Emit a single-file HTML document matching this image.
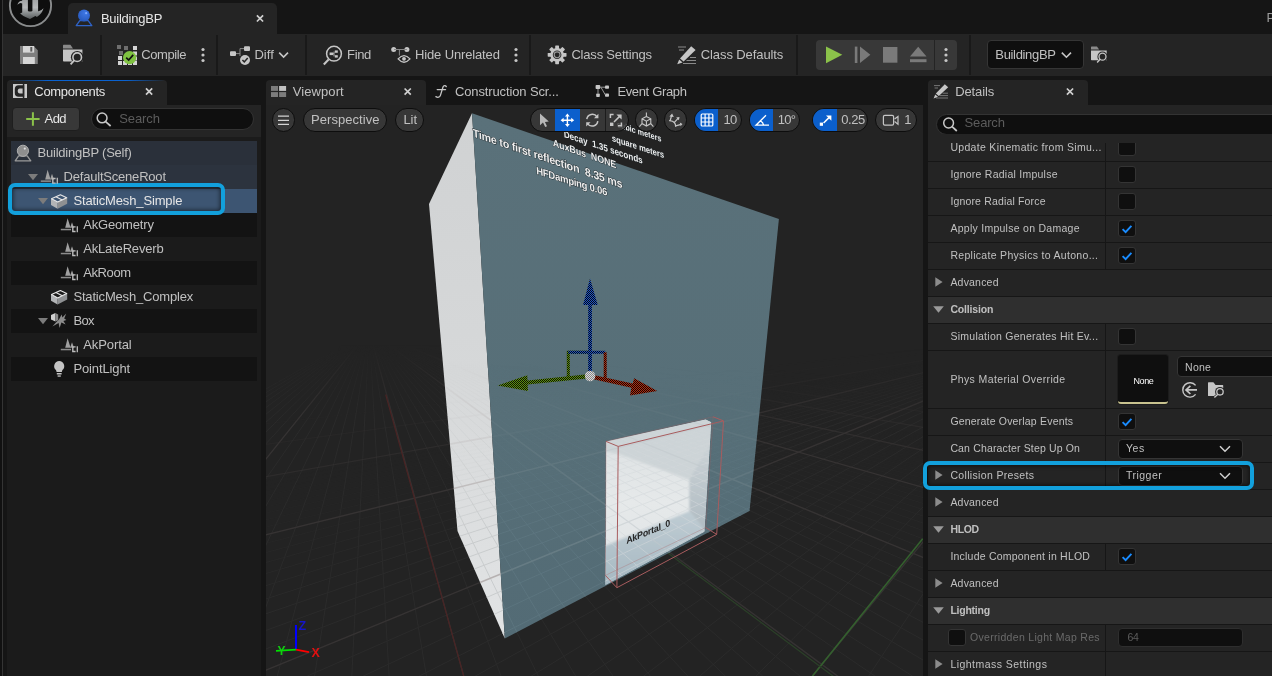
<!DOCTYPE html>
<html>
<head>
<meta charset="utf-8">
<title>BuildingBP</title>
<style>
*{box-sizing:border-box;margin:0;padding:0}
html,body{width:1272px;height:676px;overflow:hidden;background:#151515}
body{font-family:"Liberation Sans",sans-serif;color:#c0c0c0;font-size:13px;position:relative}
.a{position:absolute}
.t{position:absolute;white-space:nowrap;line-height:16px;height:16px}
svg{position:absolute;overflow:visible}
#maintab{left:68px;top:3px;width:209px;height:31px;background:#242424;border-radius:5px 5px 0 0}
#toolbar{left:3px;top:34px;width:1269px;height:42px;background:#242424}
.sep{position:absolute;top:35px;width:2px;height:40px;background:#191919}
#leftstrip{left:0;top:0;width:3px;height:676px;background:#111;border-right:1px solid #343434}
.ptab{position:absolute;top:80px;height:25px;background:#242424;border-radius:4px 4px 0 0}
#comp{left:7px;top:105px;width:254px;height:571px;background:#1b1b1b}
#tree{left:7px;top:105px;width:254px;height:32px;background:#242424}
.row{position:absolute;left:11px;width:246px;height:24px}
#vp{left:266px;top:105px;width:657px;height:571px;background:#232323;overflow:hidden}
#det{left:928px;top:105px;width:344px;height:571px;background:#242424;overflow:hidden}
.drow{position:absolute;left:928px;width:344px;height:27px;background:#242424;border-bottom:1px solid #161616}
.dhead{background:#2f2f2f}
.coldiv{position:absolute;left:1105px;width:1px;background:#161616}
.cb{position:absolute;width:17px;height:17px;background:#0f0f0f;border:1px solid #343434;border-radius:3px}
.combo{position:absolute;background:#0f0f0f;border:1px solid #353535;border-radius:4px}
.pill{position:absolute;background:rgba(60,60,60,.84);border:1px solid #0d0d0d;border-radius:12px;overflow:hidden}
.blue{position:absolute;left:0;top:0;height:100%;background:#0b5fcc}
.hl{position:absolute;border:4px solid #12a0dc;border-radius:7px;box-shadow:inset 0 0 4px 1px rgba(0,0,0,.55)}
</style>
</head>
<body>
<div id="leftstrip" class="a"></div>
<div id="maintab" class="a"></div>
<div id="toolbar" class="a"></div>
<div class="sep" style="left:100px"></div>
<div class="sep" style="left:216px"></div>
<div class="sep" style="left:305px"></div>
<div class="sep" style="left:529px"></div>
<div class="sep" style="left:796px"></div>
<div class="sep" style="left:969px"></div>
<!-- play group -->
<div class="a" style="left:816px;top:40px;width:141px;height:30px;background:#383838;border-radius:4px"></div>
<div class="a" style="left:934px;top:40px;width:1px;height:30px;background:#242424"></div>
<div class="combo" style="left:987px;top:40px;width:97px;height:29px"></div>
<svg style="left:0;top:0" width="1272" height="80" viewBox="0 0 1272 80">
<defs>
<linearGradient id="ug" gradientUnits="userSpaceOnUse" x1="0" y1="0" x2="0" y2="19"><stop offset="0" stop-color="#a2a4a5"/><stop offset="0.4" stop-color="#b6b8b9"/><stop offset="0.68" stop-color="#8a8e8f"/><stop offset="1" stop-color="#585c5d"/></linearGradient>
<radialGradient id="bs" cx="0.6" cy="0.3" r="0.8"><stop offset="0" stop-color="#3f78e6"/><stop offset="1" stop-color="#2455b8"/></radialGradient>
</defs>
<!-- UE logo -->
<circle cx="30.5" cy="5.5" r="20.6" fill="#0e0e0e" stroke="#8a8c8d" stroke-width="1.9"/>
<path d="M22.2 -2 L27.9 -2 L27.9 11 Q30.1 12 32.4 11 L32.4 -2 L38.1 -2 L38.1 11.2 Q41 11.4 43.5 8.3 Q42 14 36.9 17 L35.4 16 L30 18.9 L26 17.2 Q22.5 15.6 20.1 13.4 L22.2 12.6 L22.2 3.6 Q20 2.2 17.4 4.7 Q18.6 1 22.2 0.8 Z" fill="url(#ug)"/>
<!-- tab icon -->
<path d="M79.8 20.6 L88.2 20.6 L91.8 25.6 L76.2 25.6 Z" fill="none" stroke="#2f63c8" stroke-width="1.3" stroke-linejoin="round"/>
<circle cx="84" cy="15.6" r="6" fill="url(#bs)"/>
<circle cx="86.2" cy="13.2" r="1.1" fill="#7aa8ff"/>
<!-- tab close -->
<path d="M256.9 15.3 L263.1 21.5 M263.1 15.3 L256.9 21.5" stroke="#d0d0d0" stroke-width="1.7"/>
<!-- save -->
<path d="M20 46 L33.6 46 L37.8 50.2 L37.8 64 L20 64 Z" fill="#7e7e7e"/>
<rect x="23" y="46" width="11.2" height="6.6" fill="#d6d6d6"/>
<rect x="30.3" y="47" width="2" height="4.6" fill="#5a5a5a"/>
<rect x="23" y="57" width="11.8" height="7" fill="#d6d6d6"/>
<!-- browse folder+magnifier -->
<g id="brw">
<path d="M63 45.2 Q63 44.7 63.6 44.7 L70.4 44.7 L73 48.4 L63 48.4 Z" fill="#8a8a8a"/>
<path d="M63 49.6 L82.4 49.6 L82.4 61.6 L63.8 61.6 Q63 61.6 63 60.8 Z" fill="#c6c6c6"/>
<circle cx="77.2" cy="57.2" r="6.3" fill="#242424"/>
<path d="M68 66 L73.6 60.2 L76 62.6 L70.4 68 Z" fill="#242424"/>
<circle cx="77.2" cy="57.2" r="4.3" fill="none" stroke="#c6c6c6" stroke-width="1.6"/>
<path d="M74.2 60.4 L70.6 64.4" stroke="#c6c6c6" stroke-width="1.8"/>
</g>
<use href="#brw" transform="translate(1091 46.5) scale(0.81) translate(-63 -44.7)"/>
<!-- compile -->
<g>
<rect x="117" y="45" width="4" height="4" fill="#6e6e6e"/><rect x="124" y="46" width="4" height="4" fill="#6e6e6e"/><rect x="133" y="46" width="4" height="4" fill="#d4d4d4"/>
<rect x="119" y="51" width="4" height="4" fill="#6e6e6e"/><rect x="133" y="51.5" width="4" height="4" fill="#d4d4d4"/>
<rect x="118" y="56" width="4" height="4" fill="#d4d4d4"/><rect x="133" y="56.5" width="4" height="4" fill="#d4d4d4"/>
<rect x="118" y="61" width="4" height="4" fill="#d4d4d4"/><rect x="123" y="61" width="4" height="4" fill="#d4d4d4"/><rect x="128" y="61" width="4" height="4" fill="#d4d4d4"/><rect x="133" y="61" width="4" height="4" fill="#d4d4d4"/>
<circle cx="129.6" cy="57.6" r="6.6" fill="#7fc241"/>
<path d="M126.2 57.6 L128.7 60.1 L133.2 54.9" fill="none" stroke="#111" stroke-width="1.7"/>
</g>
<!-- kebabs -->
<g fill="#c6c6c6">
<circle cx="203" cy="49.5" r="1.6"/><circle cx="203" cy="55" r="1.6"/><circle cx="203" cy="60.5" r="1.6"/>
<circle cx="516" cy="49.5" r="1.6"/><circle cx="516" cy="55" r="1.6"/><circle cx="516" cy="60.5" r="1.6"/>
<circle cx="946" cy="49.5" r="1.6"/><circle cx="946" cy="55" r="1.6"/><circle cx="946" cy="60.5" r="1.6"/>
</g>
<!-- diff -->
<g>
<rect x="230" y="51.2" width="6" height="4.8" rx="1" fill="#c6c6c6"/>
<rect x="244" y="46.2" width="6" height="4.8" rx="1" fill="#c6c6c6"/>
<path d="M236 53.6 L240 53.6 M240 56 L240 48.6 L244 48.6" fill="none" stroke="#8a8a8a" stroke-width="1"/>
<circle cx="245" cy="60" r="5" fill="#c6c6c6"/>
<path d="M242.4 60 L244.3 61.9 L247.7 58" fill="none" stroke="#242424" stroke-width="1.5"/>
<path d="M279.2 52.6 L283.6 57 L288 52.6" fill="none" stroke="#c6c6c6" stroke-width="1.6"/>
</g>
<!-- find -->
<g>
<circle cx="334" cy="53.7" r="7.4" fill="none" stroke="#c6c6c6" stroke-width="1.5"/>
<path d="M328.6 59.6 L323.8 64.4" stroke="#c6c6c6" stroke-width="2.1"/>
<rect x="329.6" y="52.5" width="3.4" height="2.6" fill="#c6c6c6"/>
<rect x="334.8" y="50.4" width="3" height="2.4" fill="#c6c6c6"/>
<rect x="334.8" y="55.2" width="3" height="2.4" fill="#c6c6c6"/>
<path d="M333 53.8 L334 53.8 M334 51.6 L334 56.4" stroke="#c6c6c6" stroke-width="0.9"/>
</g>
<!-- hide unrelated -->
<g>
<circle cx="393.7" cy="49.5" r="2.5" fill="#c6c6c6"/><circle cx="406.9" cy="49.5" r="2.5" fill="#c6c6c6"/>
<path d="M394 49.5 L407 49.5 M399.4 49.5 L399.4 55.5" stroke="#8a8a8a" stroke-width="1"/>
<path d="M398.1 58.9 Q404 52.2 410 58.9 Q404 65.6 398.1 58.9 Z" fill="none" stroke="#c6c6c6" stroke-width="1.3"/>
<circle cx="404" cy="58.8" r="1.9" fill="#c6c6c6"/>
</g>
<!-- gear -->
<g transform="translate(557.1 54.8)">
<g fill="#c6c6c6">
<rect x="-1.9" y="-9.4" width="3.8" height="18.8" rx="0.6"/>
<rect x="-1.9" y="-9.4" width="3.8" height="18.8" rx="0.6" transform="rotate(45)"/>
<rect x="-1.9" y="-9.4" width="3.8" height="18.8" rx="0.6" transform="rotate(90)"/>
<rect x="-1.9" y="-9.4" width="3.8" height="18.8" rx="0.6" transform="rotate(135)"/>
<circle r="6.9"/>
</g>
<circle r="4.3" fill="#242424"/>
<circle r="2.9" fill="none" stroke="#9a9a9a" stroke-width="1.1"/>
</g>
<!-- class defaults -->
<g>
<path d="M678 47 L686 47 M679 50 L684 50 M690 57.5 L696 57.5 M686.5 60.5 L696 60.5 M683 63.5 L696 63.5" stroke="#8a8a8a" stroke-width="1"/>
<path d="M691.2 46.2 L695.6 50 L683.6 61.4 L680 58.4 Z" fill="#c6c6c6"/>
<path d="M679.2 59.4 L682.6 62.4 L677.2 64.2 Z" fill="#c6c6c6"/>
</g>
<!-- play controls -->
<path d="M826 46.4 L842.3 54.8 L826 63.2 Z" fill="#8bc24a"/>
<rect x="854.8" y="46.6" width="2.6" height="16.4" fill="#7a7a7a"/>
<path d="M860 46.6 L870.4 54.8 L860 63 Z" fill="#7a7a7a"/>
<rect x="883" y="47" width="14.4" height="15.7" fill="#7a7a7a"/>
<path d="M910 56.6 L926.5 56.6 L918.2 46.8 Z" fill="#7a7a7a"/>
<rect x="910" y="59.2" width="16.5" height="3" fill="#7a7a7a"/>
<!-- combo chevron -->
<path d="M1061.8 52.6 L1066.4 57.2 L1071 52.6" fill="none" stroke="#c6c6c6" stroke-width="1.6"/>
</svg>


<!-- COMPONENTS -->
<div class="ptab" style="left:7px;width:160px"></div><div class="a" style="left:9px;top:80px;width:156px;height:1px;background:linear-gradient(90deg,rgba(10,98,208,0),#0a62d0 25%,#0a62d0 75%,rgba(10,98,208,0))"></div>
<div id="comp" class="a"></div>
<div id="tree" class="a"></div>
<div class="a" style="left:11.5px;top:106.5px;width:68.5px;height:24px;background:#383838;border-radius:4px;border:1px solid #1e1e1e"></div>
<div class="a" style="left:91px;top:108px;width:163px;height:21.5px;background:#0f0f0f;border:1px solid #333;border-radius:11px"></div>
<div class="row" style="top:141px;background:#2a303a"></div>
<div class="row" style="top:165px;background:#2c333e"></div>
<div class="row" style="top:189px;background:#3d5572"></div>
<div class="row" style="top:213px;background:#131313"></div>
<div class="row" style="top:237px;background:#1b1b1b"></div>
<div class="row" style="top:261px;background:#131313"></div>
<div class="row" style="top:285px;background:#1b1b1b"></div>
<div class="row" style="top:309px;background:#131313"></div>
<div class="row" style="top:333px;background:#1b1b1b"></div>
<div class="row" style="top:357px;background:#131313"></div>
<div class="hl" style="left:8px;top:183px;width:217px;height:32px"></div>
<svg style="left:0;top:76px" width="270" height="320" viewBox="0 76 270 320">
<defs>
<g id="scn">
<path d="M0.4 10.2 L2.6 10.2 L5 0.6 L8 10.2 Z" fill="#a0a0a0"/>
<path d="M7.4 10.2 L9.4 4.6 L11.4 10.2 Z" fill="#a0a0a0"/>
<rect x="-1.8" y="11.2" width="10.2" height="1.5" fill="#8c8c8c"/>
<path d="M9 8.2 L15.8 8.2 L15.8 14.6 L9 14.6 Z" fill="#1b1b1b" opacity="0"/>
<path d="M13 9.3 L10.2 9.3 L10.2 13.9 L13 13.9" fill="none" stroke="#bcbcbc" stroke-width="1.4"/>
<path d="M14.7 8.6 L14.7 14.6" fill="none" stroke="#bcbcbc" stroke-width="1.3"/>
</g>
<g id="msh">
<path d="M0 4.6 L6.6 8 L6.6 14.6 L0 10.8 Z" fill="#b2b4b6"/>
<path d="M16.2 3.4 L16.2 9.6 L6.6 14.6 L6.6 8 Z" fill="#8e9092"/>
<path d="M0.5 4.5 L9.4 0.6 L15.7 3.5 L6.7 7.9 Z" fill="none" stroke="#e8e8e8" stroke-width="1.1" stroke-linejoin="round"/>
<path d="M4.9 2.6 L11.3 5.7" stroke="#e8e8e8" stroke-width="1.1"/>
</g>
<path id="arw" d="M0 0 L10 0 L5 6.2 Z" fill="#7c7c7c"/>
</defs>
<!-- components tab icon -->
<rect x="13" y="84" width="14" height="14" fill="#c8c8c8"/>
<path d="M18.6 85.2 L24.2 85.2 L24.2 96.8 L18.6 96.8 Q14.8 96.8 14.8 93 L14.8 89 Q14.8 85.2 18.6 85.2 Z" fill="#242424"/>
<rect x="22.8" y="84" width="1.5" height="14" fill="#242424"/>
<path d="M19.8 88.4 L22.6 88.4 L22.6 93.6 L19.8 93.6 Q17.8 93.6 17.8 91.6 L17.8 90.4 Q17.8 88.4 19.8 88.4 Z" fill="#c8c8c8"/>
<!-- tab close -->
<path d="M146 88.4 L152.2 94.6 M152.2 88.4 L146 94.6" stroke="#d0d0d0" stroke-width="1.7"/>
<!-- plus -->
<path d="M26.2 119 L39.6 119 M32.9 112.2 L32.9 125.8" stroke="#8bc24a" stroke-width="2"/>
<!-- search magnifier -->
<circle cx="102.1" cy="117.9" r="4.9" fill="none" stroke="#c8c8c8" stroke-width="1.5"/>
<path d="M105.6 121.6 L110.6 126" stroke="#c8c8c8" stroke-width="1.7"/>
<!-- row1 actor -->
<path d="M18.6 155.8 L27.2 155.8 L30.8 160.8 L15.2 160.8 Z" fill="none" stroke="#9a9a9a" stroke-width="1.3" stroke-linejoin="round"/>
<circle cx="22.9" cy="150.8" r="5.6" fill="#8e8e8e" stroke="#b0b0b0" stroke-width="1"/>
<circle cx="24.8" cy="148.6" r="1.1" fill="#e0e0e0"/>
<!-- arrows -->
<use href="#arw" x="28" y="174"/>
<use href="#arw" x="38" y="198"/>
<use href="#arw" x="38" y="318"/>
<!-- scene icons -->
<use href="#scn" x="42.6" y="169.2"/>
<use href="#scn" x="62.6" y="217.6"/>
<use href="#scn" x="62.6" y="241.6"/>
<use href="#scn" x="62.6" y="265.6"/>
<use href="#scn" x="62.6" y="337.6"/>
<!-- mesh icons -->
<use href="#msh" x="51" y="194.2"/>
<use href="#msh" x="51" y="290"/>
<!-- box collision -->
<path d="M51 315 L55.4 312.9 L55.4 321.6 L51 319.6 Z" fill="#d0d0d0"/>
<path d="M55.4 312.9 L58.2 314.4 L58.2 320.2 L55.4 321.6 Z" fill="#8a8a8a"/>
<path d="M59 319.5 L61.6 314.6 L62.4 317.6 L66.2 313.6 L64.2 318.6 L66.4 320 L63.4 321 L65.6 324.4 L61.4 322.6 L59.6 328 L58.6 323 L52.4 326.4 L56.6 321.8 Z" fill="#8c8c8c"/>
<!-- light bulb -->
<path d="M59.2 361 A5.1 5.1 0 0 1 62.4 370 L61.8 372 L56.6 372 L56 370 A5.1 5.1 0 0 1 59.2 361 Z" fill="#c4c4c4"/>
<rect x="56.8" y="373" width="4.8" height="1.5" fill="#c4c4c4"/>
<rect x="57.6" y="375.4" width="3.2" height="1.3" fill="#c4c4c4"/>
</svg>


<!-- VIEWPORT -->
<div class="ptab" style="left:266px;width:160px"></div>
<div id="vp" class="a">
<svg style="left:0;top:0" width="657" height="571" viewBox="266 105 657 571">
<defs>
<linearGradient id="gl" x1="0" y1="0" x2="0" y2="1"><stop offset="0" stop-color="#d0d2d3"/><stop offset="0.5" stop-color="#d6d8d9"/><stop offset="1" stop-color="#e2e4e5"/></linearGradient>
<linearGradient id="gr" x1="0" y1="0" x2="0" y2="1"><stop offset="0" stop-color="#5a717a"/><stop offset="0.6" stop-color="#576f78"/><stop offset="1" stop-color="#536b75"/></linearGradient>
<linearGradient id="gin" x1="0" y1="0" x2="0" y2="1"><stop offset="0" stop-color="#dadfe1"/><stop offset="0.5" stop-color="#e6e9ea"/><stop offset="1" stop-color="#dde2e4"/></linearGradient>
<linearGradient id="gfl" x1="0" y1="0" x2="0" y2="1"><stop offset="0" stop-color="#bfccd3"/><stop offset="1" stop-color="#a3b6c0"/></linearGradient>
<linearGradient id="grw" x1="0" y1="0" x2="0" y2="1"><stop offset="0" stop-color="#d3d9dc"/><stop offset="1" stop-color="#adb9c0"/></linearGradient>
<linearGradient id="fade" x1="0" y1="0" x2="0" y2="1"><stop offset="0" stop-color="#000"/><stop offset="0.45" stop-color="#000"/><stop offset="0.75" stop-color="#fff"/><stop offset="1" stop-color="#fff"/></linearGradient>
<linearGradient id="ffl" x1="0" y1="0" x2="0" y2="1"><stop offset="0" stop-color="#000"/><stop offset="0.42" stop-color="#000"/><stop offset="0.56" stop-color="#fff"/><stop offset="1" stop-color="#fff"/></linearGradient>
<mask id="mfade" maskUnits="userSpaceOnUse" x="266" y="105" width="657" height="571"><rect x="266" y="105" width="657" height="571" fill="url(#fade)"/></mask>
<mask id="mfl" maskUnits="userSpaceOnUse" x="266" y="105" width="657" height="571"><rect x="266" y="105" width="657" height="571" fill="url(#ffl)"/></mask>
<pattern id="db" width="2" height="2" patternUnits="userSpaceOnUse"><rect width="2" height="2" fill="#1d56c4"/><rect width="1" height="1" fill="#0a0a14"/><rect x="1" y="1" width="1" height="1" fill="#0a0a14"/></pattern>
<pattern id="dg" width="2" height="2" patternUnits="userSpaceOnUse"><rect width="2" height="2" fill="#5c9010"/><rect width="1" height="1" fill="#0c1004"/><rect x="1" y="1" width="1" height="1" fill="#0c1004"/></pattern>
<pattern id="dr" width="2" height="2" patternUnits="userSpaceOnUse"><rect width="2" height="2" fill="#b02c10"/><rect width="1" height="1" fill="#140604"/><rect x="1" y="1" width="1" height="1" fill="#140604"/></pattern>
<pattern id="dw" width="2" height="2" patternUnits="userSpaceOnUse"><rect width="1" height="1" fill="#222"/><rect x="1" y="1" width="1" height="1" fill="#222"/></pattern>
<clipPath id="cL"><polygon points="472.0,113.2 429.0,204.0 457.5,531.0 504.8,638.4"/></clipPath>
<clipPath id="cR"><polygon points="472.0,113.2 778.9,219.1 749.5,511.0 504.8,638.4"/></clipPath>
<clipPath id="cD"><polygon points="606.0,441.4 705.7,419.6 711.2,422.3 704.4,531.7 605.4,585.0"/></clipPath>
<filter id="bl" x="-10%" y="-10%" width="120%" height="120%"><feGaussianBlur stdDeviation="0.9"/></filter>
<g id="gmin"><line x1="369.2" y1="330.6" x2="-320.4" y2="720" opacity="1.00"/>
<line x1="369.2" y1="330.6" x2="-278.7" y2="720" opacity="1.00"/>
<line x1="369.2" y1="330.6" x2="-236.9" y2="720" opacity="1.00"/>
<line x1="369.2" y1="330.6" x2="-195.1" y2="720" opacity="1.00"/>
<line x1="369.2" y1="330.6" x2="-153.3" y2="720" opacity="1.00"/>
<line x1="369.2" y1="330.6" x2="-111.5" y2="720" opacity="1.00"/>
<line x1="369.2" y1="330.6" x2="-69.6" y2="720" opacity="1.00"/>
<line x1="369.2" y1="330.6" x2="-27.8" y2="720" opacity="1.00"/>
<line x1="369.2" y1="330.6" x2="14.1" y2="720" opacity="1.00"/>
<line x1="369.2" y1="330.6" x2="97.9" y2="720" opacity="1.00"/>
<line x1="369.2" y1="330.6" x2="139.8" y2="720" opacity="1.00"/>
<line x1="369.2" y1="330.6" x2="181.7" y2="720" opacity="1.00"/>
<line x1="369.2" y1="330.6" x2="223.7" y2="720" opacity="1.00"/>
<line x1="369.2" y1="330.6" x2="265.6" y2="720" opacity="1.00"/>
<line x1="369.2" y1="330.6" x2="307.6" y2="720" opacity="1.00"/>
<line x1="369.2" y1="330.6" x2="349.6" y2="720" opacity="1.00"/>
<line x1="369.2" y1="330.6" x2="391.6" y2="720" opacity="1.00"/>
<line x1="369.2" y1="330.6" x2="433.7" y2="720" opacity="1.00"/>
<line x1="369.2" y1="330.6" x2="517.8" y2="720" opacity="1.00"/>
<line x1="369.2" y1="330.6" x2="559.8" y2="720" opacity="1.00"/>
<line x1="369.2" y1="330.6" x2="601.9" y2="720" opacity="1.00"/>
<line x1="369.2" y1="330.6" x2="644.1" y2="720" opacity="1.00"/>
<line x1="369.2" y1="330.6" x2="686.2" y2="720" opacity="1.00"/>
<line x1="369.2" y1="330.6" x2="728.3" y2="720" opacity="1.00"/>
<line x1="369.2" y1="330.6" x2="770.5" y2="720" opacity="1.00"/>
<line x1="369.2" y1="330.6" x2="812.7" y2="720" opacity="1.00"/>
<line x1="369.2" y1="330.6" x2="854.9" y2="720" opacity="1.00"/>
<line x1="369.2" y1="330.6" x2="939.3" y2="720" opacity="1.00"/>
<line x1="369.2" y1="330.6" x2="981.5" y2="720" opacity="1.00"/>
<line x1="369.2" y1="330.6" x2="1023.8" y2="720" opacity="1.00"/>
<line x1="369.2" y1="330.6" x2="1066.1" y2="720" opacity="1.00"/>
<line x1="369.2" y1="330.6" x2="1108.3" y2="720" opacity="1.00"/>
<line x1="369.2" y1="330.6" x2="1150.7" y2="720" opacity="1.00"/>
<line x1="369.2" y1="330.6" x2="1193.0" y2="720" opacity="1.00"/>
<line x1="369.2" y1="330.6" x2="1235.3" y2="720" opacity="0.96"/>
<line x1="369.2" y1="330.6" x2="1277.7" y2="720" opacity="0.89"/>
<line x1="369.2" y1="330.6" x2="1362.4" y2="720" opacity="0.77"/>
<line x1="369.2" y1="330.6" x2="1404.8" y2="720" opacity="0.71"/>
<line x1="369.2" y1="330.6" x2="1447.3" y2="720" opacity="0.66"/>
<line x1="369.2" y1="330.6" x2="1489.7" y2="720" opacity="0.61"/>
<line x1="369.2" y1="330.6" x2="1532.1" y2="720" opacity="0.57"/>
<line x1="369.2" y1="330.6" x2="1574.6" y2="720" opacity="0.53"/>
<line x1="369.2" y1="330.6" x2="1617.1" y2="720" opacity="0.49"/>
<line x1="369.2" y1="330.6" x2="1659.6" y2="720" opacity="0.45"/>
<line x1="369.2" y1="330.6" x2="1702.1" y2="720" opacity="0.41"/>
<line x1="369.2" y1="330.6" x2="1787.2" y2="720" opacity="0.35"/>
<line x1="369.2" y1="330.6" x2="1829.8" y2="720" opacity="0.32"/>
<line x1="369.2" y1="330.6" x2="1872.4" y2="720" opacity="0.29"/>
<line x1="369.2" y1="330.6" x2="1915.0" y2="720" opacity="0.27"/>
<line x1="369.2" y1="330.6" x2="1957.6" y2="720" opacity="0.24"/>
<line x1="369.2" y1="330.6" x2="2000.2" y2="720" opacity="0.22"/>
<line x1="369.2" y1="330.6" x2="2042.9" y2="720" opacity="0.20"/>
<line x1="369.2" y1="330.6" x2="2085.5" y2="720" opacity="0.18"/>
<line x1="369.2" y1="330.6" x2="2128.2" y2="720" opacity="0.16"/>
<line x1="369.2" y1="330.6" x2="2213.6" y2="720" opacity="0.12"/>
<line x1="369.2" y1="330.6" x2="2256.4" y2="720" opacity="0.10"/>
<line x1="369.2" y1="330.6" x2="2299.1" y2="720" opacity="0.09"/>
<line x1="369.2" y1="330.6" x2="2341.9" y2="720" opacity="0.07"/>
<line x1="369.2" y1="330.6" x2="2384.7" y2="720" opacity="0.05"/>
<line x1="369.2" y1="330.6" x2="2427.5" y2="720" opacity="0.04"/>
<line x1="1098.5" y1="329.3" x2="150" y2="3134.7" opacity="1.00"/>
<line x1="1098.5" y1="329.3" x2="150" y2="2224.1" opacity="1.00"/>
<line x1="1098.5" y1="329.3" x2="150" y2="1760.0" opacity="1.00"/>
<line x1="1098.5" y1="329.3" x2="150" y2="1289.9" opacity="1.00"/>
<line x1="1098.5" y1="329.3" x2="150" y2="1154.4" opacity="1.00"/>
<line x1="1098.5" y1="329.3" x2="150" y2="1052.5" opacity="1.00"/>
<line x1="1098.5" y1="329.3" x2="150" y2="973.0" opacity="1.00"/>
<line x1="1098.5" y1="329.3" x2="150" y2="909.3" opacity="1.00"/>
<line x1="1098.5" y1="329.3" x2="150" y2="857.1" opacity="1.00"/>
<line x1="1098.5" y1="329.3" x2="150" y2="813.6" opacity="1.00"/>
<line x1="1098.5" y1="329.3" x2="150" y2="776.7" opacity="1.00"/>
<line x1="1098.5" y1="329.3" x2="150" y2="745.0" opacity="1.00"/>
<line x1="1098.5" y1="329.3" x2="150" y2="693.5" opacity="1.00"/>
<line x1="1098.5" y1="329.3" x2="150" y2="672.3" opacity="1.00"/>
<line x1="1098.5" y1="329.3" x2="150" y2="653.4" opacity="1.00"/>
<line x1="1098.5" y1="329.3" x2="150" y2="636.5" opacity="0.98"/>
<line x1="1098.5" y1="329.3" x2="150" y2="621.3" opacity="0.86"/>
<line x1="1098.5" y1="329.3" x2="150" y2="607.5" opacity="0.76"/>
<line x1="1098.5" y1="329.3" x2="150" y2="595.0" opacity="0.67"/>
<line x1="1098.5" y1="329.3" x2="150" y2="583.6" opacity="0.58"/>
<line x1="1098.5" y1="329.3" x2="150" y2="573.1" opacity="0.51"/>
<line x1="1098.5" y1="329.3" x2="150" y2="554.5" opacity="0.39"/>
<line x1="1098.5" y1="329.3" x2="150" y2="546.2" opacity="0.33"/>
<line x1="1098.5" y1="329.3" x2="150" y2="538.6" opacity="0.29"/>
<line x1="1098.5" y1="329.3" x2="150" y2="531.4" opacity="0.24"/>
<line x1="1098.5" y1="329.3" x2="150" y2="524.8" opacity="0.20"/>
<line x1="1098.5" y1="329.3" x2="150" y2="518.5" opacity="0.17"/>
<line x1="1098.5" y1="329.3" x2="150" y2="512.7" opacity="0.13"/>
<line x1="1098.5" y1="329.3" x2="150" y2="507.2" opacity="0.10"/>
<line x1="1098.5" y1="329.3" x2="150" y2="502.0" opacity="0.07"/></g>
<g id="gmaj"><line x1="369.2" y1="330.6" x2="56.0" y2="720" opacity="1.00"/>
<line x1="369.2" y1="330.6" x2="475.7" y2="720" opacity="1.00"/>
<line x1="369.2" y1="330.6" x2="897.1" y2="720" opacity="1.00"/>
<line x1="369.2" y1="330.6" x2="1320.0" y2="720" opacity="1.00"/>
<line x1="369.2" y1="330.6" x2="1744.7" y2="720" opacity="1.00"/>
<line x1="369.2" y1="330.6" x2="2170.9" y2="720" opacity="0.74"/>
<line x1="369.2" y1="330.6" x2="2598.8" y2="720" opacity="0.48"/>
<line x1="369.2" y1="330.6" x2="3028.4" y2="720" opacity="0.31"/>
<line x1="369.2" y1="330.6" x2="3459.7" y2="720" opacity="0.19"/>
<line x1="369.2" y1="330.6" x2="3892.6" y2="720" opacity="0.11"/>
<line x1="369.2" y1="330.6" x2="4327.3" y2="720" opacity="0.05"/>
<line x1="1098.5" y1="329.3" x2="150" y2="1478.7" opacity="1.00"/>
<line x1="1098.5" y1="329.3" x2="150" y2="717.6" opacity="1.00"/>
<line x1="1098.5" y1="329.3" x2="150" y2="563.4" opacity="1.00"/>
<line x1="1098.5" y1="329.3" x2="150" y2="497.2" opacity="0.58"/>
<line x1="1098.5" y1="329.3" x2="150" y2="460.3" opacity="0.27"/>
<line x1="1098.5" y1="329.3" x2="150" y2="436.8" opacity="0.11"/></g>
</defs>
<rect x="266" y="105" width="657" height="571" fill="#232323"/>
<g mask="url(#mfl)"><use href="#gmin" stroke="#2b2b2b" stroke-width="1"/><use href="#gmaj" stroke="#363333" stroke-width="1.3"/></g>
<line x1="385.7" y1="394.7" x2="463.7" y2="676" stroke="#4a2424" stroke-width="1.2"/>
<line x1="812.5" y1="676" x2="922.7" y2="538.8" stroke="#34602e" stroke-width="1.6"/>
<line x1="668.2" y1="553.3" x2="846" y2="685.7" stroke="#2b4028" stroke-width="1.2"/>
<polygon points="472.0,113.2 429.0,204.0 457.5,531.0 504.8,638.4" fill="url(#gl)"/>
<polygon points="472.0,113.2 778.9,219.1 749.5,511.0 504.8,638.4" fill="url(#gr)"/>
<g clip-path="url(#cL)"><g mask="url(#mfade)"><use href="#gmin" stroke="#c9cccd" stroke-width="1"/><use href="#gmaj" stroke="#b6b1b1" stroke-width="1.6"/></g></g>
<g clip-path="url(#cR)"><g mask="url(#mfade)" opacity="0.6"><use href="#gmin" stroke="#627b85" stroke-width="1"/><use href="#gmaj" stroke="#74878e" stroke-width="1.6"/></g></g>
<g clip-path="url(#cD)">
<polygon points="606.0,441.4 705.7,419.6 711.2,422.3 704.4,531.7 605.4,585.0" fill="url(#gin)"/>
<g filter="url(#bl)">
<polygon points="600,436 716,410 716,446 689.3,479.7 618.2,453.8 600,451" fill="#cdd4d7"/>
<polygon points="689.3,479.7 712,440 716,420 712,540 689.3,511.2" fill="url(#grw)"/>
<polygon points="598,549 689.3,511.2 712,538 598,596" fill="url(#gfl)"/>
</g>
<g opacity="0.55"><use href="#gmin" stroke="#d3d8db" stroke-width="1"/><use href="#gmaj" stroke="#c2c9cd" stroke-width="1.3"/></g>
</g>
<text transform="matrix(0.92 -0.38 0.05 1 626.5 544)" font-family="Liberation Sans" font-size="9.5" font-weight="700" fill="#262626" letter-spacing="-0.2">AkPortal_0</text>
<polygon points="606,441.4 713.1,416.8 705.7,527.6 605.4,575.4" stroke="#a85c5e" stroke-width="1" fill="none" opacity="0.3"/>
<polygon points="618.2,446.4 723.5,420.9 716.7,534.4 616.9,587.7" stroke="#a85c5e" stroke-width="1" fill="none"/>
<path d="M618.2 446.4 L606 441.4 M723.5 420.9 L713.1 416.8 M716.7 534.4 L705.7 527.6 M616.9 587.7 L605.4 575.4" stroke="#a85c5e" stroke-width="1" fill="none"/>
<text transform="matrix(0.85 0.281 0.05 1 617 127)" font-size="8.5" letter-spacing="0" font-family="Liberation Sans" font-weight="700" fill="#eeeeee" stroke="#1c2428" stroke-width="0.9" paint-order="stroke">cubic meters</text>
<text transform="matrix(0.85 0.281 0.05 1 612 141)" font-size="9" letter-spacing="0" font-family="Liberation Sans" font-weight="700" fill="#eeeeee" stroke="#1c2428" stroke-width="0.9" paint-order="stroke">square meters</text>
<text transform="matrix(0.85 0.289 0.05 1 564 137)" font-size="9.5" letter-spacing="0" font-family="Liberation Sans" font-weight="700" fill="#eeeeee" stroke="#1c2428" stroke-width="0.9" paint-order="stroke">Decay&#160; 1.35 seconds</text>
<text transform="matrix(0.88 0.308 0.05 1 553 146)" font-size="10" letter-spacing="0" font-family="Liberation Sans" font-weight="700" fill="#eeeeee" stroke="#1c2428" stroke-width="0.9" paint-order="stroke">AuxBus&#160; NONE</text>
<text transform="matrix(0.93 0.321 0.05 1 473 136.5)" font-size="11.5" letter-spacing="-0.25" font-family="Liberation Sans" font-weight="700" fill="#eeeeee" stroke="#1c2428" stroke-width="0.9" paint-order="stroke">Time to first reflection&#160; 8.35 ms</text>
<text transform="matrix(0.9 0.279 0.05 1 536.5 174)" font-size="10.5" letter-spacing="-0.25" font-family="Liberation Sans" font-weight="700" fill="#eeeeee" stroke="#1c2428" stroke-width="0.9" paint-order="stroke">HFDamping 0.06</text>
<path d="M568.3 377.5 L568.3 352.3 L590 352.3" fill="none" stroke="url(#dg)" stroke-width="3"/>
<path d="M568.3 352.3 L605.2 352.3" fill="none" stroke="url(#db)" stroke-width="3"/>
<path d="M605.2 352.3 L605.2 378" fill="none" stroke="url(#dr)" stroke-width="3"/>
<polygon points="588.2,376 588.2,305 583,305 590,278.6 597.8,305 591.9,305 591.9,376" fill="url(#db)"/>
<polygon points="590,374 527.5,380.4 527.3,375.2 497.6,385.4 528,391 527.7,384.4 590,378.2" fill="url(#dg)"/>
<polygon points="590,374.2 632.7,383.6 634.2,378.2 657.2,390.9 630,395.4 631.4,387.8 590,378.4" fill="url(#dr)"/>
<circle cx="590.1" cy="376" r="5.2" fill="#dcdcdc"/>
<circle cx="590.1" cy="376" r="5.2" fill="url(#dw)" opacity="0.45"/>
<path d="M296 649.5 L296 625" stroke="#0000ff" stroke-width="2"/>
<path d="M296 649.6 L276 650.8" stroke="#00e000" stroke-width="1.8"/>
<path d="M296 649.6 L309 652.2" stroke="#ff0000" stroke-width="1.8"/>
<text x="298.4" y="629.8" font-family="Liberation Sans" font-size="12.5" font-weight="700" fill="#1616c8">Z</text>
<text x="277.6" y="655.4" font-family="Liberation Sans" font-size="12" font-weight="700" fill="#10d010">Y</text>
<text x="311.4" y="656.6" font-family="Liberation Sans" font-size="12.5" font-weight="700" fill="#e01010">X</text>
</svg>
</div>
<div class="pill" style="left:272px;top:108px;width:23px;height:23.5px"></div>
<div class="pill" style="left:303px;top:108px;width:84px;height:23.5px"></div>
<div class="pill" style="left:395px;top:108px;width:29px;height:23.5px"></div>
<div class="pill" style="left:529.5px;top:108px;width:99px;height:23.5px"><div class="blue" style="left:24.5px;width:24.5px"></div><div class="a" style="left:74px;top:0;width:1px;height:23.5px;background:#1c1c1c"></div></div>
<div class="pill" style="left:635px;top:108px;width:23px;height:23.5px"></div>
<div class="pill" style="left:664px;top:108px;width:23px;height:23.5px"></div>
<div class="pill" style="left:693.5px;top:108px;width:48px;height:23.5px"><div class="blue" style="width:23.6px"></div></div>
<div class="pill" style="left:748.6px;top:108px;width:51px;height:23.5px"><div class="blue" style="width:23.6px"></div></div>
<div class="pill" style="left:812.4px;top:108px;width:56px;height:23.5px"><div class="blue" style="width:23.6px"></div></div>
<div class="pill" style="left:875.2px;top:108px;width:41.5px;height:23.5px"></div>
<svg style="left:260px;top:76px" width="680" height="64" viewBox="260 76 680 64">
<!-- viewport tab icon -->
<rect x="271" y="86" width="7" height="4.9" fill="#7c7c7c"/><rect x="279.1" y="86" width="7" height="4.9" fill="#c2c2c2"/>
<rect x="271" y="92.1" width="7" height="4.9" fill="#7c7c7c"/><rect x="279.1" y="92.1" width="7" height="4.9" fill="#7c7c7c"/>
<path d="M404.6 88.5 L410.8 94.7 M410.8 88.5 L404.6 94.7" stroke="#d0d0d0" stroke-width="1.7"/>
<!-- event graph icon -->
<rect x="595.6" y="85" width="4.6" height="4" rx="0.8" fill="#c6c6c6"/>
<rect x="605" y="85.6" width="4" height="3.2" rx="0.8" fill="#c6c6c6"/>
<rect x="605" y="93.6" width="4" height="3.2" rx="0.8" fill="#c6c6c6"/>
<rect x="596.2" y="93.4" width="3.6" height="3.6" rx="0.8" fill="#c6c6c6"/>
<path d="M600 87.2 L605 87.2 M601 87.4 L605.4 95 M598 89 L598 93.4" stroke="#9a9a9a" stroke-width="1" fill="none"/>
<path d="M446.3 86.6 C445.6 85.2 443.6 85.2 443 87 L440.4 95.4 C439.8 97.4 437.6 97.8 435.9 96.6 M437.2 89.6 L445.6 89.6" fill="none" stroke="#c6c6c6" stroke-width="1.3" stroke-linecap="round"/>
<!-- hamburger -->
<path d="M278 116.2 L289 116.2 M278 120.3 L289 120.3 M278 124.4 L289 124.4" stroke="#d4d4d4" stroke-width="1.2"/>
<!-- select arrow -->
<path d="M540 113.4 L540 125.2 L543 122.6 L545.2 127 L547 126.2 L544.9 121.9 L548.8 121.6 Z" fill="#b8b8b8"/>
<!-- move -->
<g stroke="#fff" stroke-width="1.4" fill="#fff">
<path d="M567.4 115.2 L567.4 125.2 M562.4 120.2 L572.4 120.2" fill="none"/>
<path d="M567.4 113.4 L569.8 116.4 L565 116.4 Z M567.4 127 L569.8 124 L565 124 Z M560.6 120.2 L563.6 117.8 L563.6 122.6 Z M574.2 120.2 L571.2 117.8 L571.2 122.6 Z" stroke="none"/>
</g>
<!-- rotate -->
<g fill="none" stroke="#c6c6c6" stroke-width="1.5">
<path d="M586.8 119.2 A5.6 5.6 0 0 1 597 116.8"/>
<path d="M597.8 121.2 A5.6 5.6 0 0 1 587.6 123.6"/>
</g>
<path d="M598.4 113.8 L598.4 118.2 L594 118.2 Z M586.2 126.6 L586.2 122.2 L590.6 122.2 Z" fill="#c6c6c6"/>
<!-- scale tool -->
<g fill="none" stroke="#c6c6c6" stroke-width="1.5">
<path d="M610.4 118 L610.4 114.6 L613.6 114.6 M618 125.8 L621.4 125.8 L621.4 122.6 M614 122 L620.6 115.4"/>
</g>
<path d="M616.4 114.4 L621.6 114.4 L621.6 119.6 Z" fill="#c6c6c6"/>
<rect x="610" y="122.6" width="3.4" height="3.4" fill="#c6c6c6"/>
<!-- surface snap cube -->
<g fill="none" stroke="#c6c6c6" stroke-width="1.1">
<path d="M646.4 116.4 L650.8 118.8 L650.8 123.6 L646.4 126 L642 123.6 L642 118.8 Z M646.4 121.2 L646.4 126 M642 118.8 L646.4 121.2 L650.8 118.8 M646.4 116.4 L646.4 112.6 M642 123.6 L639.4 126.6 M650.8 123.6 L653.4 126.6"/>
</g>
<!-- axes snap -->
<g fill="none" stroke="#c6c6c6" stroke-width="1.2" stroke-linecap="round">
<path d="M669.6 120.7 Q673 121 674.3 122.5 Q675.7 124 675.6 126.2"/>
<path d="M670.2 120.5 L671.5 116"/><path d="M674.4 122.4 L677.8 118.7"/><path d="M675.7 125.9 L680.2 124.6"/>
</g>
<path d="M672.1 113.5 L669.4 116.5 L673.8 117.1 Z M679.5 116.9 L676.2 117.5 L678.9 120.2 Z M682.5 123.9 L679.8 122.4 L680.6 126.3 Z" fill="#c6c6c6"/>
<!-- grid icon -->
<g fill="none" stroke="#fff" stroke-width="1.2">
<rect x="701.2" y="114" width="11.6" height="12" rx="1"/>
<path d="M705.1 114 L705.1 126 M708.9 114 L708.9 126 M701.2 118 L712.8 118 M701.2 122 L712.8 122"/>
</g>
<!-- angle icon -->
<path d="M766 115.2 L756 125.2 L769 125.2 M760.4 120.8 A6 6 0 0 1 763.6 125.2" fill="none" stroke="#fff" stroke-width="1.3"/>
<!-- scale snap icon -->
<path d="M823.6 123 L830 116.6" stroke="#fff" stroke-width="1.5"/>
<path d="M826 115.4 L831.4 115.4 L831.4 120.8 Z" fill="#fff"/>
<rect x="819.8" y="122.6" width="3.2" height="3.2" fill="#fff"/>
<!-- camera -->
<rect x="883.4" y="115.4" width="10.2" height="9.8" rx="1.4" fill="none" stroke="#c6c6c6" stroke-width="1.2"/>
<path d="M894.6 119 L898 116.4 L898 124.2 L894.6 121.6" fill="none" stroke="#c6c6c6" stroke-width="1.2"/>
</svg>


<!-- DETAILS -->
<div class="ptab" style="left:928px;width:160px"></div>
<div id="det" class="a"></div>
<div class="a" style="left:936px;top:113.5px;width:360px;height:21.5px;background:#0f0f0f;border:1px solid #333;border-radius:11px"></div>
<div class="drow" style="top:135px;height:27px"></div>
<div class="coldiv" style="top:135px;height:26px"></div>
<div class="cb" style="left:1118px;top:139px;width:18px"></div>
<div class="drow" style="top:162px;height:27px"></div>
<div class="coldiv" style="top:162px;height:26px"></div>
<div class="cb" style="left:1118px;top:166px;width:18px"></div>
<div class="drow" style="top:189px;height:27px"></div>
<div class="coldiv" style="top:189px;height:26px"></div>
<div class="cb" style="left:1118px;top:193px;width:18px"></div>
<div class="drow" style="top:216px;height:27px"></div>
<div class="coldiv" style="top:216px;height:26px"></div>
<div class="cb" style="left:1118px;top:220px;width:18px"><svg style="left:2px;top:2px" width="12" height="12" viewBox="0 0 12 12"><path d="M1.6 6.2 L4.6 9.2 L10.4 2.8" fill="none" stroke="#1a8cff" stroke-width="1.9"/></svg></div>
<div class="drow" style="top:243px;height:27px"></div>
<div class="coldiv" style="top:243px;height:26px"></div>
<div class="cb" style="left:1118px;top:247px;width:18px"><svg style="left:2px;top:2px" width="12" height="12" viewBox="0 0 12 12"><path d="M1.6 6.2 L4.6 9.2 L10.4 2.8" fill="none" stroke="#1a8cff" stroke-width="1.9"/></svg></div>
<div class="drow" style="top:270px;height:27px"></div>
<svg style="left:934.5px;top:277.0px" width="8" height="10" viewBox="0 0 8 10"><path d="M0.3 0.2 L7.6 5 L0.3 9.8 Z" fill="#8c8c8c"/></svg>
<div class="drow dhead" style="top:297px;height:27px"></div>
<svg style="left:933px;top:305.5px" width="11" height="7" viewBox="0 0 11 7"><path d="M0.2 0.2 L10.8 0.2 L5.5 6.8 Z" fill="#9a9a9a"/></svg>
<div class="drow" style="top:324px;height:27px"></div>
<div class="coldiv" style="top:324px;height:26px"></div>
<div class="cb" style="left:1118px;top:328px;width:18px"></div>
<div class="drow" style="top:351px;height:58px"></div>
<div class="coldiv" style="top:351px;height:57px"></div>
<div class="a" style="left:1118px;top:355px;width:50px;height:49px;background:#0f0f0f;border-radius:3px;border-bottom:2px solid #c9c38f;box-shadow:0 0 0 1px #1c1c1c"></div>
<div class="combo" style="left:1177px;top:355.5px;width:120px;height:21px"></div>
<div class="drow" style="top:409px;height:27px"></div>
<div class="coldiv" style="top:409px;height:26px"></div>
<div class="cb" style="left:1118px;top:413px;width:18px"><svg style="left:2px;top:2px" width="12" height="12" viewBox="0 0 12 12"><path d="M1.6 6.2 L4.6 9.2 L10.4 2.8" fill="none" stroke="#1a8cff" stroke-width="1.9"/></svg></div>
<div class="drow" style="top:436px;height:27px"></div>
<div class="coldiv" style="top:436px;height:26px"></div>
<div class="combo" style="left:1118px;top:438.5px;width:125px;height:20px"></div>
<svg style="left:1219px;top:444.5px" width="12" height="8" viewBox="0 0 12 8"><path d="M1 1.2 L6 6.2 L11 1.2" fill="none" stroke="#d0d0d0" stroke-width="1.5"/></svg>
<div class="drow" style="top:463px;height:27px"></div>
<div class="coldiv" style="top:463px;height:26px"></div>
<svg style="left:934.5px;top:470.0px" width="8" height="10" viewBox="0 0 8 10"><path d="M0.3 0.2 L7.6 5 L0.3 9.8 Z" fill="#8c8c8c"/></svg>
<div class="combo" style="left:1118px;top:465.5px;width:125px;height:20px"></div>
<svg style="left:1219px;top:471.5px" width="12" height="8" viewBox="0 0 12 8"><path d="M1 1.2 L6 6.2 L11 1.2" fill="none" stroke="#d0d0d0" stroke-width="1.5"/></svg>
<div class="drow" style="top:490px;height:27px"></div>
<svg style="left:934.5px;top:497.0px" width="8" height="10" viewBox="0 0 8 10"><path d="M0.3 0.2 L7.6 5 L0.3 9.8 Z" fill="#8c8c8c"/></svg>
<div class="drow dhead" style="top:517px;height:27px"></div>
<svg style="left:933px;top:525.5px" width="11" height="7" viewBox="0 0 11 7"><path d="M0.2 0.2 L10.8 0.2 L5.5 6.8 Z" fill="#9a9a9a"/></svg>
<div class="drow" style="top:544px;height:27px"></div>
<div class="coldiv" style="top:544px;height:26px"></div>
<div class="cb" style="left:1118px;top:548px;width:18px"><svg style="left:2px;top:2px" width="12" height="12" viewBox="0 0 12 12"><path d="M1.6 6.2 L4.6 9.2 L10.4 2.8" fill="none" stroke="#1a8cff" stroke-width="1.9"/></svg></div>
<div class="drow" style="top:571px;height:27px"></div>
<svg style="left:934.5px;top:578.0px" width="8" height="10" viewBox="0 0 8 10"><path d="M0.3 0.2 L7.6 5 L0.3 9.8 Z" fill="#8c8c8c"/></svg>
<div class="drow dhead" style="top:598px;height:27px"></div>
<svg style="left:933px;top:606.5px" width="11" height="7" viewBox="0 0 11 7"><path d="M0.2 0.2 L10.8 0.2 L5.5 6.8 Z" fill="#9a9a9a"/></svg>
<div class="drow" style="top:625px;height:27px"></div>
<div class="coldiv" style="top:625px;height:26px"></div>
<div class="cb" style="left:948px;top:629px;width:18px"></div>
<div class="combo" style="left:1118px;top:628px;width:125px;height:19px;border-color:#2e2e2e"></div>
<div class="drow" style="top:652px;height:27px"></div>
<div class="coldiv" style="top:652px;height:26px"></div>
<svg style="left:934.5px;top:659.0px" width="8" height="10" viewBox="0 0 8 10"><path d="M0.3 0.2 L7.6 5 L0.3 9.8 Z" fill="#8c8c8c"/></svg>
<div class="a" style="left:928px;top:134px;width:344px;height:9px;background:#242424"></div>
<svg style="left:1176px;top:378px" width="60" height="26" viewBox="1176 378 60 26">
<path d="M1195.6 385.4 A7.2 7.2 0 1 0 1195.6 394.4" fill="none" stroke="#c6c6c6" stroke-width="1.4"/>
<path d="M1197 389.9 L1186.4 389.9 M1190.4 385.8 L1186 389.9 L1190.4 394" fill="none" stroke="#c6c6c6" stroke-width="1.7"/>
<path d="M1208 382.8 Q1208 382.2 1208.6 382.2 L1213.4 382.2 L1215.6 385 L1222.6 385 Q1223.2 385 1223.2 385.6 L1223.2 388 L1214 396 L1208.6 396 Q1208 396 1208 395.4 Z" fill="#c6c6c6"/>
<circle cx="1220" cy="391.8" r="4.9" fill="#242424"/>
<circle cx="1220" cy="391.8" r="3.2" fill="none" stroke="#c6c6c6" stroke-width="1.3"/>
<path d="M1217.6 394.4 L1214.4 397.6" stroke="#c6c6c6" stroke-width="1.4"/>
</svg>
<div class="hl" style="left:923px;top:461px;width:331px;height:29px"></div><!-- details tab icon -->
<svg style="left:928px;top:80px" width="160" height="60" viewBox="928 80 160 60">
<path d="M934 85.6 L940 85.6 M934.6 88 L938 88 M942.6 93.2 L948 93.2 M939.6 95.6 L948 95.6 M936 98 L948 98" stroke="#808080" stroke-width="0.9"/>
<path d="M944.8 84.2 L948.2 87.2 L938.8 96 L935.8 93.6 Z" fill="#c6c6c6"/>
<path d="M935.2 94.4 L938 96.8 L933.6 98.4 Z" fill="#c6c6c6"/>
<path d="M1066.9 88.5 L1073.1 94.7 M1073.1 88.5 L1066.9 94.7" stroke="#d0d0d0" stroke-width="1.7"/>
<circle cx="948.6" cy="123" r="4.9" fill="none" stroke="#c8c8c8" stroke-width="1.5"/>
<path d="M952.1 126.7 L956.8 131" stroke="#c8c8c8" stroke-width="1.7"/>
</svg>


<div class="a" style="left:0;top:0;width:1272px;height:676px;will-change:transform;overflow:hidden">
<span class="t" style="left:100.9px;top:11.1px;font-size:13px;color:#e6e6e6;font-weight:400;letter-spacing:-0.24px">BuildingBP</span>
<span class="t" style="left:141.2px;top:47.3px;font-size:13px;color:#c0c0c0;font-weight:400;letter-spacing:-0.38px">Compile</span>
<span class="t" style="left:254.4px;top:47.3px;font-size:13px;color:#c0c0c0;font-weight:400;letter-spacing:0.08px">Diff</span>
<span class="t" style="left:347.1px;top:47.3px;font-size:13px;color:#c0c0c0;font-weight:400;letter-spacing:-0.35px">Find</span>
<span class="t" style="left:415.0px;top:47.3px;font-size:13px;color:#c0c0c0;font-weight:400;letter-spacing:-0.14px">Hide Unrelated</span>
<span class="t" style="left:571.4px;top:47.3px;font-size:13px;color:#c0c0c0;font-weight:400;letter-spacing:-0.19px">Class Settings</span>
<span class="t" style="left:700.8px;top:47.3px;font-size:13px;color:#c0c0c0;font-weight:400;letter-spacing:-0.10px">Class Defaults</span>
<span class="t" style="left:995.3px;top:47.3px;font-size:13px;color:#c0c0c0;font-weight:400;letter-spacing:-0.33px">BuildingBP</span>
<span class="t" style="left:34.3px;top:84.4px;font-size:13px;color:#e6e6e6;font-weight:400;letter-spacing:-0.30px">Components</span>
<span class="t" style="left:292.8px;top:84.4px;font-size:13px;color:#c0c0c0;font-weight:400;letter-spacing:0.08px">Viewport</span>
<span class="t" style="left:455.0px;top:84.4px;font-size:13px;color:#c0c0c0;font-weight:400;letter-spacing:-0.13px">Construction Scr...</span>
<span class="t" style="left:617.4px;top:84.4px;font-size:13px;color:#c0c0c0;font-weight:400;letter-spacing:-0.35px">Event Graph</span>
<span class="t" style="left:955.3px;top:84.4px;font-size:13px;color:#c0c0c0;font-weight:400;letter-spacing:-0.15px">Details</span>
<span class="t" style="left:44.6px;top:110.9px;font-size:13px;color:#e6e6e6;font-weight:400;letter-spacing:-0.58px">Add</span>
<span class="t" style="left:119.3px;top:110.9px;font-size:13px;color:#5c5c5c;font-weight:400;letter-spacing:-0.12px">Search</span>
<span class="t" style="left:37.6px;top:144.7px;font-size:13px;color:#c0c0c0;font-weight:400;letter-spacing:-0.23px">BuildingBP (Self)</span>
<span class="t" style="left:63.5px;top:168.7px;font-size:13px;color:#c0c0c0;font-weight:400;letter-spacing:-0.20px">DefaultSceneRoot</span>
<span class="t" style="left:73.4px;top:192.7px;font-size:13px;color:#e6e6e6;font-weight:400;letter-spacing:-0.14px">StaticMesh_Simple</span>
<span class="t" style="left:83.2px;top:216.7px;font-size:13px;color:#c0c0c0;font-weight:400;letter-spacing:-0.17px">AkGeometry</span>
<span class="t" style="left:83.2px;top:240.7px;font-size:13px;color:#c0c0c0;font-weight:400;letter-spacing:-0.17px">AkLateReverb</span>
<span class="t" style="left:83.2px;top:264.7px;font-size:13px;color:#c0c0c0;font-weight:400;letter-spacing:-0.38px">AkRoom</span>
<span class="t" style="left:73.4px;top:288.7px;font-size:13px;color:#c0c0c0;font-weight:400;letter-spacing:-0.17px">StaticMesh_Complex</span>
<span class="t" style="left:73.4px;top:312.7px;font-size:13px;color:#c0c0c0;font-weight:400;letter-spacing:-0.60px">Box</span>
<span class="t" style="left:83.2px;top:336.7px;font-size:13px;color:#c0c0c0;font-weight:400;letter-spacing:-0.09px">AkPortal</span>
<span class="t" style="left:73.4px;top:360.7px;font-size:13px;color:#c0c0c0;font-weight:400;letter-spacing:-0.12px">PointLight</span>
<span class="t" style="left:311.1px;top:112.2px;font-size:13px;color:#c0c0c0;font-weight:400;letter-spacing:0.04px">Perspective</span>
<span class="t" style="left:403.4px;top:112.2px;font-size:13px;color:#c0c0c0;font-weight:400;letter-spacing:-0.04px">Lit</span>
<span class="t" style="left:723.6px;top:112.2px;font-size:13px;color:#c0c0c0;font-weight:400;letter-spacing:-0.93px">10</span>
<span class="t" style="left:777.7px;top:112.2px;font-size:13px;color:#c0c0c0;font-weight:400;letter-spacing:-0.69px">10°</span>
<span class="t" style="left:841.3px;top:112.2px;font-size:13px;color:#c0c0c0;font-weight:400;letter-spacing:-0.45px">0.25</span>
<span class="t" style="left:904.2px;top:112.2px;font-size:13px;color:#c0c0c0;font-weight:400;letter-spacing:-2.93px">1</span>
<span class="t" style="left:964.6px;top:115.2px;font-size:13px;color:#5c5c5c;font-weight:400;letter-spacing:-0.17px">Search</span>
<span class="t" style="left:950.4px;top:139.3px;font-size:10.5px;color:#c0c0c0;font-weight:400;letter-spacing:0.31px">Update Kinematic from Simu...</span>
<span class="t" style="left:950.4px;top:166.3px;font-size:10.5px;color:#c0c0c0;font-weight:400;letter-spacing:0.25px">Ignore Radial Impulse</span>
<span class="t" style="left:950.4px;top:193.3px;font-size:10.5px;color:#c0c0c0;font-weight:400;letter-spacing:0.16px">Ignore Radial Force</span>
<span class="t" style="left:950.4px;top:220.3px;font-size:10.5px;color:#c0c0c0;font-weight:400;letter-spacing:0.27px">Apply Impulse on Damage</span>
<span class="t" style="left:950.4px;top:247.3px;font-size:10.5px;color:#c0c0c0;font-weight:400;letter-spacing:0.30px">Replicate Physics to Autono...</span>
<span class="t" style="left:950.4px;top:274.3px;font-size:10.5px;color:#c0c0c0;font-weight:400;letter-spacing:0.20px">Advanced</span>
<span class="t" style="left:950.4px;top:301.3px;font-size:10.5px;color:#c0c0c0;font-weight:700;letter-spacing:-0.16px">Collision</span>
<span class="t" style="left:950.4px;top:328.3px;font-size:10.5px;color:#c0c0c0;font-weight:400;letter-spacing:0.27px">Simulation Generates Hit Ev...</span>
<span class="t" style="left:950.4px;top:371.3px;font-size:10.5px;color:#c0c0c0;font-weight:400;letter-spacing:0.38px">Phys Material Override</span>
<span class="t" style="left:950.4px;top:413.3px;font-size:10.5px;color:#c0c0c0;font-weight:400;letter-spacing:0.19px">Generate Overlap Events</span>
<span class="t" style="left:950.4px;top:440.3px;font-size:10.5px;color:#c0c0c0;font-weight:400;letter-spacing:0.15px">Can Character Step Up On</span>
<span class="t" style="left:950.4px;top:467.3px;font-size:10.5px;color:#c0c0c0;font-weight:400;letter-spacing:0.34px">Collision Presets</span>
<span class="t" style="left:950.4px;top:494.3px;font-size:10.5px;color:#c0c0c0;font-weight:400;letter-spacing:0.20px">Advanced</span>
<span class="t" style="left:950.4px;top:521.3px;font-size:10.5px;color:#c0c0c0;font-weight:700;letter-spacing:-0.31px">HLOD</span>
<span class="t" style="left:950.4px;top:548.3px;font-size:10.5px;color:#c0c0c0;font-weight:400;letter-spacing:0.22px">Include Component in HLOD</span>
<span class="t" style="left:950.4px;top:575.3px;font-size:10.5px;color:#c0c0c0;font-weight:400;letter-spacing:0.20px">Advanced</span>
<span class="t" style="left:950.4px;top:602.3px;font-size:10.5px;color:#c0c0c0;font-weight:700;letter-spacing:-0.24px">Lighting</span>
<span class="t" style="left:970.1px;top:629.3px;font-size:10.5px;color:#6a6a6a;font-weight:400;letter-spacing:0.30px">Overridden Light Map Res</span>
<span class="t" style="left:950.4px;top:656.3px;font-size:10.5px;color:#c0c0c0;font-weight:400;letter-spacing:0.46px">Lightmass Settings</span>
<span class="t" style="left:1126.1px;top:440.3px;font-size:10.5px;color:#c0c0c0;font-weight:400;letter-spacing:0.49px">Yes</span>
<span class="t" style="left:1126.1px;top:467.3px;font-size:10.5px;color:#c0c0c0;font-weight:400;letter-spacing:0.45px">Trigger</span>
<span class="t" style="left:1185.1px;top:358.7px;font-size:10.5px;color:#c0c0c0;font-weight:400;letter-spacing:0.22px">None</span>
<span class="t" style="left:1133.5px;top:372.8px;font-size:9px;color:#ffffff;font-weight:400;letter-spacing:-0.38px">None</span>
<span class="t" style="left:1127.4px;top:628.8px;font-size:10.5px;color:#5c5c5c;font-weight:400;letter-spacing:-0.14px">64</span>
<span class="t" style="left:1266.5px;top:10.2px;font-size:13px;color:#9a9a9a;font-weight:400;letter-spacing:0.00px">Parent class</span>
</div>
</body>
</html>
